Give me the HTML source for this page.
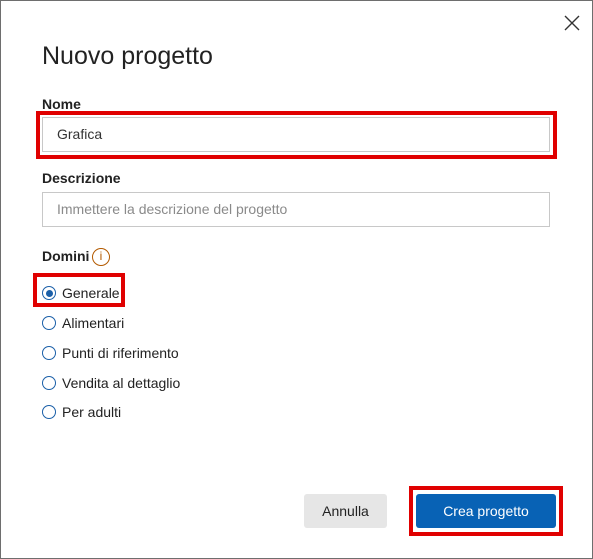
<!DOCTYPE html>
<html><head><style>
*{margin:0;padding:0;box-sizing:border-box}
body{width:593px;height:559px;background:#fff;font-family:"Liberation Sans",sans-serif;position:relative;overflow:hidden;color:#222}
.frame{position:absolute;left:0;top:0;width:593px;height:559px;border:1px solid #6e6e6e}
.a{position:absolute}
.red{position:absolute;border:4px solid #e00000}
.inp{position:absolute;border:1px solid #c8c8c8;background:#fff;font-size:14px;padding-left:14px;line-height:33px}
.lbl{font-size:14px;font-weight:bold;color:#222}
.radio{position:absolute;width:14px;height:14px;border:1px solid #1a5fa8;border-radius:50%;background:#fff}
.rt{position:absolute;font-size:14px;color:#222}
</style></head><body>
<div class="frame"></div>
<svg class="a" style="left:564px;top:15px" width="16" height="16"><path d="M1 1L15 15M15 1L1 15" stroke="#333" stroke-width="1.4"/></svg>
<div class="a" style="left:42px;top:42px;font-size:25px;color:#222">Nuovo progetto</div>
<div class="a lbl" style="left:42px;top:96px">Nome</div>
<div class="red" style="left:36px;top:111px;width:521px;height:48px"></div>
<div class="inp" style="left:42px;top:117px;width:508px;height:35px;color:#333">Grafica</div>
<div class="a lbl" style="left:42px;top:170px">Descrizione</div>
<div class="inp" style="left:42px;top:192px;width:508px;height:35px;color:#8a8a8a">Immettere la descrizione del progetto</div>
<div class="a lbl" style="left:42px;top:248px">Domini</div>
<div class="a" style="left:92px;top:248px;width:18px;height:18px;border:1.5px solid #b35a00;border-radius:50%;font-size:12px;text-align:center;line-height:15px;color:#b35a00">i</div>
<div class="red" style="left:33px;top:273px;width:92px;height:34px"></div>
<div class="radio" style="left:42px;top:286px"><div style="position:absolute;left:2.5px;top:2.5px;width:7px;height:7px;border-radius:50%;background:#1a5fa8"></div></div>
<div class="rt" style="left:62px;top:285px">Generale</div>
<div class="radio" style="left:42px;top:316px"></div><div class="rt" style="left:62px;top:315px">Alimentari</div>
<div class="radio" style="left:42px;top:346px"></div><div class="rt" style="left:62px;top:345px">Punti di riferimento</div>
<div class="radio" style="left:42px;top:376px"></div><div class="rt" style="left:62px;top:375px">Vendita al dettaglio</div>
<div class="radio" style="left:42px;top:405px"></div><div class="rt" style="left:62px;top:404px">Per adulti</div>
<div class="a" style="left:304px;top:494px;width:83px;height:34px;background:#e6e6e6;border-radius:3px;font-size:14px;text-align:center;line-height:34px;color:#222">Annulla</div>
<div class="red" style="left:409px;top:486px;width:154px;height:50px"></div>
<div class="a" style="left:416px;top:494px;width:140px;height:34px;background:#0862b5;border-radius:3px;font-size:14px;text-align:center;line-height:34px;color:#fff">Crea progetto</div>
</body></html>
